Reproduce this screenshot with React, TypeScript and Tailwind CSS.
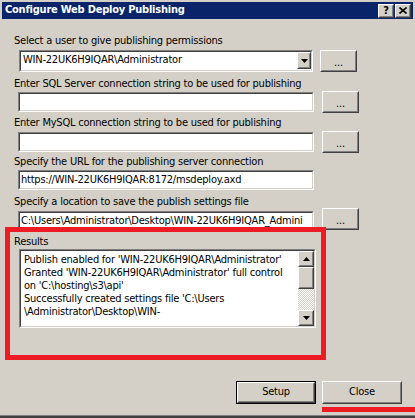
import type { ReactNode } from "react";

const resultLines = [
  "Publish enabled for 'WIN-22UK6H9IQAR\\Administrator'",
  "Granted 'WIN-22UK6H9IQAR\\Administrator' full control",
  "on 'C:\\hosting\\s3\\api'",
  "Successfully created settings file 'C:\\Users",
  "\\Administrator\\Desktop\\WIN-",
];

// classic 3D bevels
function Raised({ className = "", children }: { className?: string; children?: ReactNode }) {
  return (
    <div
      className={`border border-t-white border-l-white border-b-[#404040] border-r-[#404040] bg-[#d4d0c8] ${className}`}
    >
      <div className="flex h-full w-full items-center justify-center border border-t-[#d4d0c8] border-l-[#d4d0c8] border-b-[#808080] border-r-[#808080]">
        {children}
      </div>
    </div>
  );
}

function Sunken({ className = "", children }: { className?: string; children?: ReactNode }) {
  return (
    <div
      className={`border border-t-[#808080] border-l-[#808080] border-b-white border-r-white ${className}`}
    >
      <div className="flex h-full w-full overflow-hidden border border-t-[#404040] border-l-[#404040] border-b-[#d4d0c8] border-r-[#d4d0c8] bg-white">
        {children}
      </div>
    </div>
  );
}

function Ellipsis() {
  return (
    <Raised className="h-[22px] w-[37px] shrink-0">
      <span className="pt-[3px] leading-none">...</span>
    </Raised>
  );
}

function Arrow({ down = false }: { down?: boolean }) {
  return (
    <svg width="7" height="4" viewBox="0 0 7 4">
      <polygon points={down ? "0,0 7,0 3.5,4" : "3.5,0 7,4 0,4"} fill="#000" />
    </svg>
  );
}

function Label({ children, className = "" }: { children: ReactNode; className?: string }) {
  return <div className={`ml-[14px] h-[13px] leading-[13px] ${className}`}>{children}</div>;
}

export default function App() {
  return (
    <div className="relative flex h-[418px] w-[415px] flex-col overflow-hidden bg-[#d4d0c8] font-['DejaVu_Sans_Condensed','DejaVu_Sans',sans-serif] text-[11px] tracking-[-0.22px] text-black">
      {/* title bar */}
      <div className="mx-[2px] mt-[2px] flex h-[17px] items-center bg-[#0a246a] pl-[3px] pr-[2px]">
        <span className="font-bold text-white">Configure Web Deploy Publishing</span>
        <div className="ml-auto flex gap-[1px]">
          <Raised className="h-[14px] w-[16px]">
            <span className="text-[11px] font-bold leading-none">?</span>
          </Raised>
          <Raised className="h-[14px] w-[16px]">
            <svg width="8" height="7" viewBox="0 0 8 7">
              <path d="M0.5 0.5 L7.5 6.5 M7.5 0.5 L0.5 6.5" stroke="#000" strokeWidth="1.6" />
            </svg>
          </Raised>
        </div>
      </div>

      <Label className="mt-[15px]">Select a user to give publishing permissions</Label>
      <div className="ml-[19px] mt-[3px] flex h-[22px] gap-[7px]">
        <Sunken className="h-[22px] w-[294px]">
          <span className="min-w-0 flex-1 pl-[2px] leading-[16px]">WIN-22UK6H9IQAR\Administrator</span>
          <Raised className="h-[17px] w-[14px] shrink-0">
            <Arrow down />
          </Raised>
        </Sunken>
        <Ellipsis />
      </div>

      <Label className="mt-[5px]">Enter SQL Server connection string to be used for publishing</Label>
      <div className="ml-[18px] flex h-[23px] items-center gap-[8px]">
        <Sunken className="h-[20px] w-[296px]" />
        <Ellipsis />
      </div>

      <Label className="mt-[3px]">Enter MySQL connection string to be used for publishing</Label>
      <div className="ml-[18px] mt-[1px] flex h-[23px] items-center gap-[8px]">
        <Sunken className="h-[20px] w-[296px]" />
        <Ellipsis />
      </div>

      <Label className="mt-[2px]">Specify the URL for the publishing server connection</Label>
      <div className="ml-[18px] mt-[2px] flex h-[20px]">
        <Sunken className="h-[20px] w-[296px]">
          <span className="pl-[1px] leading-[16px]">https://WIN-22UK6H9IQAR:8172/msdeploy.axd</span>
        </Sunken>
      </div>

      <Label className="mt-[5px] h-[12px]">Specify a location to save the publish settings file</Label>
      <div className="ml-[18px] flex h-[22px] items-end gap-[8px]">
        <Sunken className="h-[19px] w-[296px] shrink-0">
          <span className="min-w-0 whitespace-nowrap pl-[1px] leading-[15px]">
            C:\Users\Administrator\Desktop\WIN-22UK6H9IQAR_Admini
          </span>
        </Sunken>
        <Ellipsis />
      </div>

      <Label className="mt-[5px]">Results</Label>
      <Sunken className="ml-[19px] mt-[1px] h-[79px] w-[297px]">
        <div className="min-w-0 flex-1 pl-[3px] pt-[2px] leading-[13px]">
          {resultLines.map((line) => (
            <div key={line} className="whitespace-nowrap">
              {line}
            </div>
          ))}
        </div>
        <div className="flex w-[16px] shrink-0 flex-col bg-[#d4d0c8]">
          <Raised className="h-[16px]">
            <Arrow />
          </Raised>
          <Raised className="h-[22px]" />
          <div className="flex-1 bg-[repeating-conic-gradient(#ffffff_0_25%,#d4d0c8_0_50%)] bg-[length:2px_2px]" />
          <Raised className="h-[16px]">
            <Arrow down />
          </Raised>
        </div>
      </Sunken>

      <div className="ml-[236px] mt-[53px] flex gap-[6px]">
        <div className="h-[23px] w-[80px] border border-black">
          <Raised className="h-full w-full">Setup</Raised>
        </div>
        <Raised className="h-[23px] w-[80px]">Close</Raised>
      </div>

      <div className="mt-auto h-[1px] bg-[#808080]" />
      <div className="h-[2px] bg-[#404040]" />

      {/* red annotations */}
      <div className="absolute left-[5px] top-[227px] h-[133px] w-[321px] border-[5px] border-[#ed1c24]" />
      <div className="absolute left-[322px] top-[407px] h-[5px] w-[93px] bg-[#ed1c24]" />
    </div>
  );
}
